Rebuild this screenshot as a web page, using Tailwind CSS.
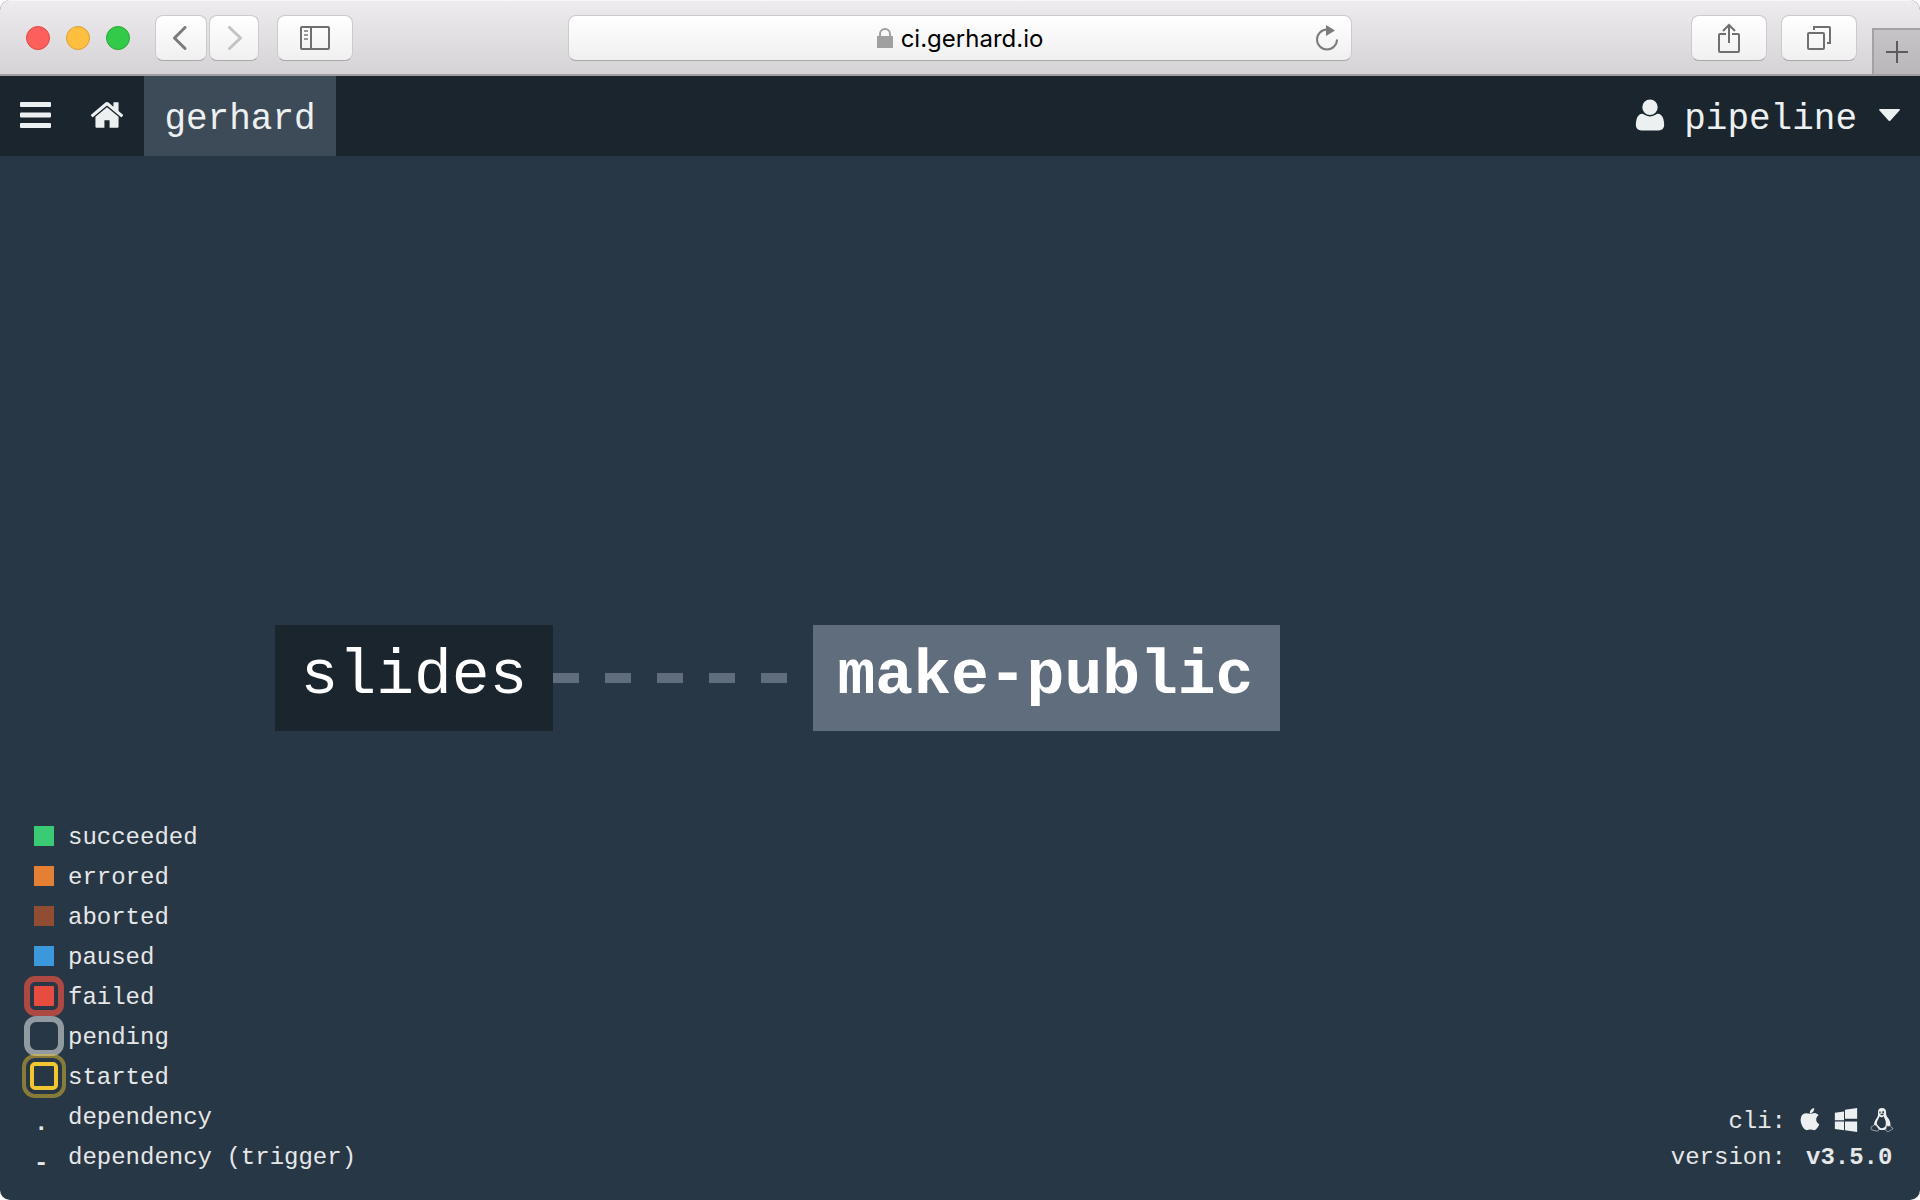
<!DOCTYPE html>
<html lang="en">
<head>
<meta charset="utf-8">
<title>ci.gerhard.io</title>
<script src="https://cdn.jsdelivr.net/npm/@tailwindcss/browser@4"></script>
</head>
<body class="bg-white">
<div class="flex min-h-screen flex-col overflow-hidden rounded-[10px] bg-[#283745] font-['Courier_New','Liberation_Mono',monospace] text-[#e6e7e8]">

  <!-- Browser toolbar -->
  <div class="flex h-19 shrink-0 items-stretch border-b-2 border-[#a09ea0] bg-linear-to-b from-[#eeecef] to-[#d5d3d6] font-['Inter',sans-serif] shadow-[inset_0_1px_0_#f8f7f8]">
    <div class="flex flex-1 items-center pt-px">
      <div class="ml-[26px] flex gap-4">
        <span class="size-6 rounded-full border border-[#e2463f] bg-[#fd605c]"></span>
        <span class="size-6 rounded-full border border-[#de9f34] bg-[#febe40]"></span>
        <span class="size-6 rounded-full border border-[#27a833] bg-[#34ca49]"></span>
      </div>
      <div class="ml-[25px] flex gap-[2px]">
        <button aria-label="Back" class="flex h-[46px] w-[52px] items-center justify-center rounded-lg border border-[#cccacc] border-b-[#a9a7a9] bg-linear-to-b from-white to-[#f1f0f1]">
          <svg class="h-6 w-4" viewBox="0 0 16 24" fill="none" stroke="#7b7b7b" stroke-width="3" stroke-linecap="round" stroke-linejoin="round"><path d="M12 1.500 1.500 12 12 22.500"/></svg>
        </button>
        <button aria-label="Forward" class="flex h-[46px] w-[50px] items-center justify-center rounded-lg border border-[#cccacc] border-b-[#a9a7a9] bg-linear-to-b from-white to-[#f1f0f1]">
          <svg class="h-6 w-4" viewBox="0 0 16 24" fill="none" stroke="#c3c3c3" stroke-width="3" stroke-linecap="round" stroke-linejoin="round"><path d="M3.500 1.500 14.500 12 3.500 22.500"/></svg>
        </button>
      </div>
      <button aria-label="Show sidebar" class="ml-[18px] flex h-[46px] w-19 items-center justify-center rounded-lg border border-[#cccacc] border-b-[#a9a7a9] bg-linear-to-b from-white to-[#f1f0f1]">
        <svg class="h-6 w-[30px]" viewBox="0 0 30 24" fill="none" stroke="#6f6f6f" stroke-width="2"><rect x="1" y="1" width="28" height="22" rx="1"/><path d="M11 1v22"/><path stroke="#989898" d="M4 5h4M4 9h4M4 13h4"/></svg>
      </button>
    </div>
    <div class="relative flex w-[41%] max-w-[784px] items-center pt-px">
      <div class="flex h-[46px] w-full items-center justify-center gap-2 rounded-lg border border-[#cccacc] border-b-[#a9a7a9] bg-linear-to-b from-white to-[#f1f0f1] text-black">
        <svg class="h-5 w-4" viewBox="0 0 16 20"><path d="M3 9V6a5 5 0 0 1 10 0v3" fill="none" stroke="#a0a0a0" stroke-width="2"/><rect y="8" width="16" height="12" fill="#a0a0a0"/></svg>
        <span class="pt-[3px] text-2xl">ci.gerhard.io</span>
      </div>
      <button aria-label="Reload" class="absolute right-[13px]">
        <svg class="h-[26px] w-6" viewBox="0 0 24 26" fill="none"><path d="M22 14.500A10 10 0 1 1 12 4.500" stroke="#7b7b7b" stroke-width="2"/><path d="M11 0l9 5.500L11 11z" fill="#7b7b7b"/></svg>
      </button>
    </div>
    <div class="flex flex-1 items-center justify-end pt-px">
      <button aria-label="Share" class="flex h-[46px] w-19 items-center justify-center rounded-lg border border-[#cccacc] border-b-[#a9a7a9] bg-linear-to-b from-white to-[#f1f0f1]">
        <svg class="h-[30px] w-[22px]" viewBox="0 0 22 30" fill="none" stroke="#6f6f6f" stroke-width="2"><path d="M8 11H2q-1 0-1 1v16q0 1 1 1h18q1 0 1-1V12q0-1-1-1h-6M11 20V2M5 8l6-6 6 6"/></svg>
      </button>
      <button aria-label="Show all tabs" class="ml-[14px] flex h-[46px] w-19 items-center justify-center rounded-lg border border-[#cccacc] border-b-[#a9a7a9] bg-linear-to-b from-white to-[#f1f0f1]">
        <svg class="size-6" viewBox="0 0 24 24" fill="none" stroke="#6f6f6f" stroke-width="2"><rect x="1" y="7" width="16" height="16" rx="1"/><path d="M7 4V1h15q1 0 1 1v15h-3"/></svg>
      </button>
      <button aria-label="New tab" class="ml-[15px] flex h-[46px] w-12 items-center justify-center self-end border-t-2 border-l-2 border-[#a3a1a3] bg-linear-to-b from-[#c6c4c7] to-[#b9b7ba]">
        <svg class="size-[22px]" viewBox="0 0 22 22" stroke="#5d5c5d" stroke-width="2"><path d="M11 0v22M0 11h22"/></svg>
      </button>
    </div>
  </div>

  <!-- Top navigation -->
  <nav class="flex h-20 shrink-0 items-stretch bg-[#1b252e] text-4xl text-[#ecf0f1]">
    <button aria-label="Menu" class="flex w-[71px] items-center pb-0.5 pl-5">
      <svg class="h-[26px] w-[31px]" viewBox="0 0 31 26" fill="currentColor"><rect width="31" height="5" rx="1"/><rect y="10.500" width="31" height="5" rx="1"/><rect y="21" width="31" height="5" rx="1"/></svg>
    </button>
    <a href="#" aria-label="Home" class="flex w-[73px] items-center pb-0.5 pl-[18px]">
      <svg class="size-9" viewBox="0 0 1792 1792" fill="currentColor"><path d="M1472 992v480q0 26-19 45t-45 19h-384v-384H768v384H384q-26 0-45-19t-19-45V992q0-1 .5-3t.5-3l575-474 575 474q1 2 1 6zm223-69l-62 74q-8 9-21 11h-3q-13 0-21-7L896 424l-692 577q-12 8-24 7-13-2-21-11l-62-74q-8-10-7-23.500t11-21.500l719-599q32-26 76-26t76 26l244 204V288q0-14 9-23t23-9h192q14 0 23 9t9 23v408l219 182q10 8 11 21.500t-7 23.500z"/></svg>
    </a>
    <a href="#" class="flex w-48 items-center justify-center bg-[#3d4a57] pt-2">gerhard</a>
    <button class="ml-auto flex items-center pr-5 pb-0.5">
      <svg class="size-9" viewBox="0 0 1792 1792" fill="currentColor"><path d="M1600 1405q0 120-73 189.500t-194 69.500h-874q-121 0-194-69.500t-73-189.500q0-53 3.500-103.500t14-109 26.500-108.500 43-97.500 62-81 85.500-53.500 111.500-20q9 0 42 21.500t74.500 48 108 48 133.500 21.500 133.500-21.500 108-48 74.500-48 42-21.500q61 0 111.500 20t85.500 53.500 62 81 43 97.500 26.500 108.500 14 109 3.500 103.500zm-320-893q0 159-112.500 271.500t-271.500 112.500-271.500-112.500-112.500-271.500 112.500-271.500 271.500-112.500 271.500 112.500 112.500 271.500z"/></svg>
      <span class="ml-4 pt-2.5">pipeline</span>
      <svg class="ml-[22px] h-3 w-[21px]" viewBox="0 0 21 12" fill="currentColor"><path d="M1 0h19q1.500 0 .5 1.500L11.500 11.500q-1 1-2 0L.5 1.500Q-.5 0 1 0z"/></svg>
    </button>
  </nav>

  <!-- Pipeline graph -->
  <main class="flex flex-1 flex-col justify-between">
    <div class="flex items-center pt-[469px] pl-[275px] text-[63px] text-white">
      <a href="#" class="flex h-[106px] w-[278px] items-center justify-center bg-[#1b252e] pb-0.5">slides</a>
      <svg class="h-[10px] w-[260px]" viewBox="0 0 260 10"><path d="M0 5h236" stroke="#5f6d7d" stroke-width="10" stroke-dasharray="26 26"/></svg>
      <a href="#" class="flex h-[106px] w-[467px] items-center justify-center bg-[#5f6d7d] pr-0.5 pb-0.5 font-bold">make-public</a>
    </div>

    <div class="flex items-end justify-between pr-[26px] pb-6 text-2xl">
      <!-- Status legend -->
      <dl class="grid auto-rows-[40px] grid-cols-[20px_auto] gap-x-[14px] pl-[34px] leading-[44px]">
        <dt class="size-5 self-center bg-[#3acb74]"></dt><dd>succeeded</dd>
        <dt class="size-5 self-center bg-[#e48033]"></dt><dd>errored</dd>
        <dt class="size-5 self-center bg-[#914d33]"></dt><dd>aborted</dd>
        <dt class="size-5 self-center bg-[#3b99db]"></dt><dd>paused</dd>
        <dt class="size-5 self-center rounded-[1px] bg-[#e74c41] outline-6 outline-offset-4 outline-[#ad4843]"></dt><dd>failed</dd>
        <dt class="size-5 self-center rounded-[2px] outline-6 outline-offset-4 outline-[#929aa1]"></dt><dd>pending</dd>
        <dt class="-m-1 size-7 self-center rounded-[5px] border-4 border-[#f1c62f] outline-4 outline-offset-4 outline-[#f1c62f]/48"></dt><dd>started</dd>
        <dt class="pt-1.5 font-bold">.</dt><dd>dependency</dd>
        <dt class="pt-1.5 font-bold">-</dt><dd>dependency (trigger)</dd>
      </dl>

      <!-- CLI downloads and version -->
      <div class="grid grid-cols-[auto_auto] gap-x-5 text-right leading-9">
        <span>cli:</span>
        <span class="-ml-2 flex items-center gap-3 pb-1 text-[#ecf0f1]">
          <a href="#" aria-label="macOS"><svg class="size-6" viewBox="0 0 1792 1792" fill="currentColor"><path d="M1585 1215q-39 125-123 250-129 196-257 196-49 0-140-32-86-32-151-32-61 0-142 33-81 34-132 34-152 0-301-259-147-261-147-503 0-228 113-374 113-144 284-144 72 0 177 30 104 30 138 30 45 0 143-34 102-34 173-34 119 0 213 65 52 36 104 100-79 67-114 118-65 94-65 207 0 124 69 223t158 126zm-376-1173q0 61-29 136-30 75-93 138-54 54-108 72-37 11-104 17 3-149 78-257 74-107 250-148 1 3 2.500 11t2.500 11q0 4 .5 10t.5 10z"/></svg></a>
          <a href="#" aria-label="Windows"><svg class="size-6" viewBox="0 0 1792 1792" fill="currentColor"><path d="M746 1006v651l-682-94v-557h682zm0-743v659h-682v-565zm982 743v786l-907-125v-661h907zm0-1006v794h-907v-669z"/></svg></a>
          <a href="#" aria-label="Linux"><svg class="size-6" viewBox="0 0 24 24"><path fill="currentColor" d="M12 0c-3 0-4.200 1.800-4 4.500.2 3-.2 4-1.600 6-1.600 2.300-2.200 4.200-2.600 6.700l3.200 2.300 3 2.500h4.500l2.500-2 3.500-2.500c.2-2.800-.8-5.400-2.600-7.800-1.500-2-1.900-2.800-1.800-5.200C16.200 1.700 15 0 12 0z"/><path fill="#283745" d="M9.400 8.500c-.2 1.800-2 3.600-2.500 6-.3 1.400.3 2.200 1.300 3.300.9 1 1.900 2.400 3.300 2.400 2 0 3.500-.8 4-2.400.6-2 .5-4.800-.7-6.800-.6-1-.8-1.700-1-2.700l-2 1.300zM9.300 3.500h1.400v1.800H9.300zM12.300 3.300h1.700v2h-1.700zM10 6.500l2-.9 2 .9-2 1.100z"/><path fill="#283745" stroke="currentColor" stroke-width=".6" stroke-linejoin="round" d="M4.500 16.800l1.700.5 2.500 3.500c.6 1.500-.4 2.500-2 2.300-1.800-.4-3-1-5-1.300-1-.3-.4-1.500-.5-2.500 0-1.200.9-.8 1.700-1.100.8-.3.800-1.300 1.600-1.400zM16.500 17.300c1 1 2 1 3.500.2.600.3.500 1 1.100 1.600l1.700 1.200c.6.8-1 1.200-2.200 1.900-1 .7-2 1.500-3.200 1.300-1.500-.3-1.700-1.300-1.500-2.600z"/></svg></a>
        </span>
        <span>version:</span>
        <span class="text-left font-bold">v3.5.0</span>
      </div>
    </div>
  </main>
</div>
</body>
</html>
